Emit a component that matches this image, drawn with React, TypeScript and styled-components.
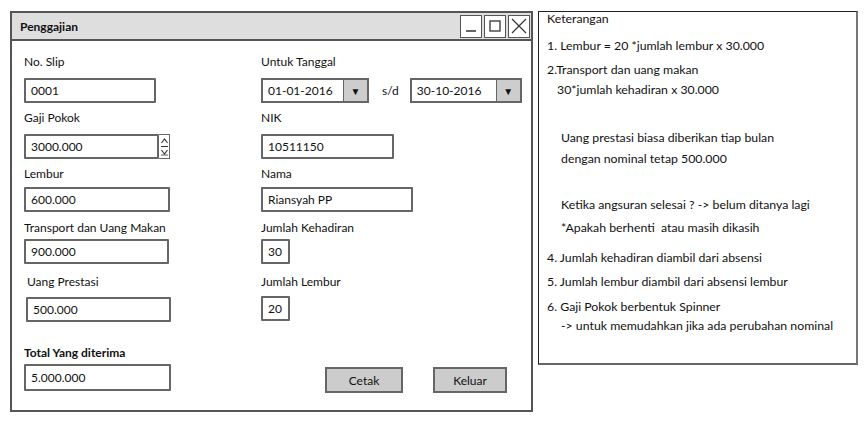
import React from "react";
import styled, { createGlobalStyle } from "styled-components";

const Global = createGlobalStyle`
  html, body { margin: 0; padding: 0; background: #fff; }
  body { font-family: "Lato", "Open Sans", sans-serif; font-size: 12px; color: #111; }
`;

const Page = styled.div`
  display: flex;
  align-items: flex-start;
  padding: 11px 0 0 10px;
  gap: 5px;
`;

const Window = styled.div`
  width: 523px;
  height: 401px;
  box-sizing: border-box;
  border: 2px solid #555;
  display: flex;
  flex-direction: column;
  background: #fff;
`;

const TitleBar = styled.div`
  height: 28px;
  box-sizing: border-box;
  background: #dedede;
  border-bottom: 2px solid #555;
  display: flex;
  align-items: center;
  justify-content: space-between;
  padding: 0 1px 0 8px;
`;

const Title = styled.span`
  font-weight: 700;
  font-size: 12px;
`;

const WinButtons = styled.div`
  display: flex;
  gap: 2px;
`;

const WinButton = styled.div`
  width: 22px;
  height: 23px;
  box-sizing: border-box;
  border: 1.5px solid #555;
  background: #fff;
  display: flex;
  align-items: center;
  justify-content: center;
`;

const Form = styled.div`
  display: flex;
  flex-direction: column;
  padding: 0 0 0 12px;
`;

const Row = styled.div<{ $top: number }>`
  display: grid;
  grid-template-columns: 237px 1fr;
  margin-top: ${(p) => p.$top}px;
`;

const Field = styled.div<{ $gap: number; $indent?: number }>`
  display: flex;
  flex-direction: column;
  align-items: flex-start;
  gap: ${(p) => p.$gap}px;
  padding-left: ${(p) => p.$indent ?? 0}px;
`;

const Label = styled.div<{ $bold?: boolean; $indent?: number }>`
  height: 15px;
  line-height: 15px;
  font-weight: ${(p) => (p.$bold ? 700 : 400)};
  padding-left: ${(p) => p.$indent ?? 0}px;
`;

const Input = styled.div<{ $w: number; $h?: number }>`
  width: ${(p) => p.$w}px;
  height: ${(p) => p.$h ?? 25}px;
  box-sizing: border-box;
  border: 2px solid #666;
  border-radius: 1px;
  background: #fff;
  display: flex;
  align-items: center;
  padding-left: 5px;
  font-size: 12px;
`;

const InputWrap = styled.div`
  display: flex;
  align-items: stretch;
`;

const Spinner = styled.div`
  width: 11px;
  height: 25px;
  box-sizing: border-box;
  border: 1.5px solid #666;
  border-left: none;
  background: #fff;
  display: flex;
  align-items: center;
  justify-content: center;
`;

const DateRow = styled.div`
  display: flex;
  align-items: center;
`;

const Combo = styled.div<{ $w: number }>`
  width: ${(p) => p.$w}px;
  height: 25px;
  box-sizing: border-box;
  border: 2px solid #666;
  background: #fff;
  display: flex;
  align-items: stretch;
`;

const ComboText = styled.div`
  flex: 1;
  display: flex;
  align-items: center;
  padding-left: 5px;
`;

const ComboArrow = styled.div`
  width: 23px;
  background: #cdcdcd;
  border-left: 1.5px solid #666;
  display: flex;
  align-items: center;
  justify-content: center;
  font-size: 10px;
`;

const Sd = styled.span`
  margin: 0 11px 0 13px;
`;

const BottomRow = styled.div`
  display: flex;
  align-items: flex-start;
  margin-top: 23px;
`;

const Buttons = styled.div`
  display: flex;
  gap: 30px;
  margin-left: 154px;
  margin-top: 22px;
`;

const Button = styled.div<{ $w: number }>`
  width: ${(p) => p.$w}px;
  height: 26px;
  box-sizing: border-box;
  border: 2px solid #666;
  background: #cccccc;
  display: flex;
  align-items: center;
  justify-content: center;
`;

const Notes = styled.div`
  width: 320px;
  height: 354px;
  box-sizing: border-box;
  border: 1px solid #222;
  border-right: 2px solid #777;
  border-bottom: 2px solid #666;
  padding: 0 0 0 8px;
  display: flex;
  flex-direction: column;
  font-size: 12.3px;
`;

const Note = styled.div<{ $top: number; $indent?: number }>`
  margin-top: ${(p) => p.$top}px;
  padding-left: ${(p) => p.$indent ?? 0}px;
  height: 15px;
  line-height: 15px;
  white-space: pre;
`;

const MinIcon = () => (
  <svg width="14" height="14" viewBox="0 0 14 14"><line x1="2" y1="12" x2="12" y2="12" stroke="#333" strokeWidth="1.5" /></svg>
);
const MaxIcon = () => (
  <svg width="14" height="14" viewBox="0 0 14 14"><rect x="2" y="2" width="10" height="10" fill="none" stroke="#333" strokeWidth="1.3" /></svg>
);
const CloseIcon = () => (
  <svg width="16" height="16" viewBox="0 0 16 16"><path d="M1 1 L15 15 M15 1 L1 15" stroke="#333" strokeWidth="1.2" /></svg>
);
const SpinIcon = () => (
  <svg width="9" height="21" viewBox="0 0 9 21">
    <path d="M1.5 7 L4.5 3 L7.5 7" fill="none" stroke="#333" strokeWidth="1.1" />
    <line x1="1" y1="10.5" x2="8" y2="10.5" stroke="#333" strokeWidth="1" />
    <path d="M1.5 14 L4.5 18 L7.5 14" fill="none" stroke="#333" strokeWidth="1.1" />
    <line x1="1" y1="19" x2="8" y2="19" stroke="#333" strokeWidth="0.8" />
  </svg>
);

export default function App() {
  return (
    <>
      <Global />
      <Page>
        <Window>
          <TitleBar>
            <Title>Penggajian</Title>
            <WinButtons>
              <WinButton><MinIcon /></WinButton>
              <WinButton><MaxIcon /></WinButton>
              <WinButton><CloseIcon /></WinButton>
            </WinButtons>
          </TitleBar>
          <Form>
            <Row $top={13}>
              <Field $gap={9}>
                <Label>No. Slip</Label>
                <Input $w={132}>0001</Input>
              </Field>
              <Field $gap={9}>
                <Label>Untuk Tanggal</Label>
                <DateRow>
                  <Combo $w={108}>
                    <ComboText>01-01-2016</ComboText>
                    <ComboArrow>▼</ComboArrow>
                  </Combo>
                  <Sd>s/d</Sd>
                  <Combo $w={112}>
                    <ComboText>30-10-2016</ComboText>
                    <ComboArrow>▼</ComboArrow>
                  </Combo>
                </DateRow>
              </Field>
            </Row>
            <Row $top={7}>
              <Field $gap={9} $indent={0}>
                <Label>Gaji Pokok</Label>
                <InputWrap>
                  <Input $w={135}>3000.000</Input>
                  <Spinner><SpinIcon /></Spinner>
                </InputWrap>
              </Field>
              <Field $gap={9}>
                <Label>NIK</Label>
                <Input $w={133}>10511150</Input>
              </Field>
            </Row>
            <Row $top={7}>
              <Field $gap={6}>
                <Label>Lembur</Label>
                <Input $w={146}>600.000</Input>
              </Field>
              <Field $gap={6}>
                <Label>Nama</Label>
                <Input $w={152}>Riansyah PP</Input>
              </Field>
            </Row>
            <Row $top={8}>
              <Field $gap={4}>
                <Label>Transport dan Uang Makan</Label>
                <Input $w={145}>900.000</Input>
              </Field>
              <Field $gap={4}>
                <Label>Jumlah Kehadiran</Label>
                <Input $w={29}>30</Input>
              </Field>
            </Row>
            <Row $top={10}>
              <Field $gap={8} $indent={2}>
                <Label $indent={1}>Uang Prestasi</Label>
                <Input $w={145}>500.000</Input>
              </Field>
              <Field $gap={7}>
                <Label>Jumlah Lembur</Label>
                <Input $w={29}>20</Input>
              </Field>
            </Row>
            <BottomRow>
              <Field $gap={4}>
                <Label $bold>Total Yang diterima</Label>
                <Input $w={147} $h={27}>5.000.000</Input>
              </Field>
              <Buttons>
                <Button $w={78}>Cetak</Button>
                <Button $w={74}>Keluar</Button>
              </Buttons>
            </BottomRow>
          </Form>
        </Window>
        <Notes>
          <Note $top={-1}>Keterangan</Note>
          <Note $top={12}>1. Lembur = 20 *jumlah lembur x 30.000</Note>
          <Note $top={9}>2.Transport dan uang makan</Note>
          <Note $top={5} $indent={10}>30*jumlah kehadiran x 30.000</Note>
          <Note $top={33} $indent={14}>Uang prestasi biasa diberikan tiap bulan</Note>
          <Note $top={6} $indent={14}>dengan nominal tetap 500.000</Note>
          <Note $top={31} $indent={14}>Ketika angsuran selesai ? -&gt; belum ditanya lagi</Note>
          <Note $top={8} $indent={14}>*Apakah berhenti  atau masih dikasih</Note>
          <Note $top={15}>4. Jumlah kehadiran diambil dari absensi</Note>
          <Note $top={9}>5. Jumlah lembur diambil dari absensi lembur</Note>
          <Note $top={10}>6. Gaji Pokok berbentuk Spinner</Note>
          <Note $top={4} $indent={14}>-&gt; untuk memudahkan jika ada perubahan nominal</Note>
        </Notes>
      </Page>
    </>
  );
}
